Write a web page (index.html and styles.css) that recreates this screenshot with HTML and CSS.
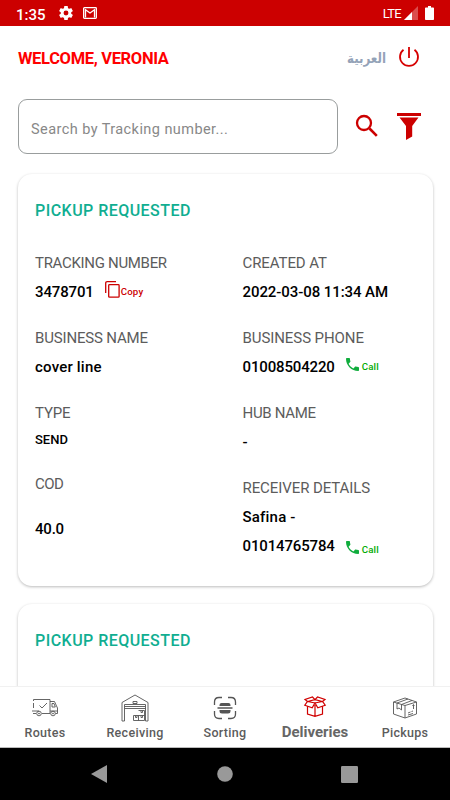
FILE: index.html
```html
<!DOCTYPE html>
<html lang="en">
<head>
<meta charset="utf-8">
<title>Deliveries</title>
<link rel="stylesheet" href="styles.css">
</head>
<body>
<svg class="defs" width="0" height="0">
  <symbol id="phone" viewBox="3 3 18 18"><path d="M6.62 10.79c1.44 2.83 3.76 5.14 6.59 6.59l2.2-2.2c.27-.27.67-.36 1.02-.24 1.12.37 2.33.57 3.57.57.55 0 1 .45 1 1V20c0 .55-.45 1-1 1C10.610 21 3 13.390 3 4c0-.55.45-1 1-1h3.500c.55 0 1 .45 1 1 0 1.250.2 2.450.57 3.570.11.35.03.74-.25 1.020z"/></symbol>
</svg>
<div class="screen">
  <div class="status">
    <span class="clock">1:35</span>
    <svg class="gear" width="14" height="14" viewBox="2 2 20 20"><path fill="#fff" d="M19.430 12.980c.04-.32.07-.64.07-.98s-.03-.66-.07-.98l2.110-1.650c.19-.15.24-.42.12-.64l-2-3.460c-.12-.22-.39-.3-.61-.22l-2.490 1c-.52-.4-1.080-.73-1.690-.98l-.38-2.650C14.460 2.180 14.250 2 14 2h-4c-.25 0-.46.18-.49.42l-.38 2.650c-.61.25-1.170.59-1.690.98l-2.490-1c-.23-.09-.49 0-.61.22l-2 3.460c-.13.22-.07.49.12.64l2.110 1.650c-.04.32-.07.65-.07.98s.03.66.07.98l-2.110 1.650c-.19.15-.24.42-.12.64l2 3.460c.12.22.39.3.61.22l2.490-1c.52.4 1.080.73 1.690.98l.38 2.650c.03.24.24.42.49.42h4c.25 0 .46-.18.49-.42l.38-2.650c.61-.25 1.170-.59 1.690-.98l2.490 1c.23.09.49 0 .61-.22l2-3.460c.12-.22.07-.49-.12-.64zM12 15.500a3.500 3.500 0 1 1 0-7 3.500 3.500 0 0 1 0 7z"/></svg>
    <svg class="mail" width="14" height="12" viewBox="0 0 14 12"><rect x=".65" y=".65" width="12.700" height="10.700" rx=".8" fill="none" stroke="#fff" stroke-width="1.300"/><path d="M2.500 10.500V2.800L7 6l4.500-3.200v7.700" fill="none" stroke="#fff" stroke-width="1.300"/></svg>
    <span class="lte">LTE</span>
    <svg class="signal" width="14" height="14" viewBox="0 0 14 14"><path d="M14 0v14H0z" fill="#fff" opacity=".3"/><path d="M8 6v8H0z" fill="#fff"/></svg>
    <svg class="battery" width="9" height="14" viewBox="0 0 9 14"><path d="M3 0h3v1.500h2.200q.8 0 .8.800v11q0 .7-.8.700H.8q-.8 0-.8-.7v-11q0-.8.800-.8H3z" fill="#fff"/></svg>
  </div>
  <header class="header">
    <h1 class="welcome">WELCOME, VERONIA</h1>
    <span class="lang" lang="ar" dir="rtl">العربية</span>
    <svg class="power" width="22" height="22" viewBox="0 0 22 22" fill="none" stroke="#d60000" stroke-width="1.800"><path d="M11 1v11M5.500 3.800a9 9 0 1 0 11 0"/></svg>
  </header>
  <div class="search">
    <div class="input">Search by Tracking number...</div>
    <svg class="lens" width="24" height="24" viewBox="0 0 24 24" fill="none" stroke="#c00"><circle cx="9" cy="9" r="7" stroke-width="2.300"/><path d="M14.500 14.500l7.300 7.300" stroke-width="2.600"/></svg>
    <svg class="funnel" width="24" height="27" viewBox="0 0 24 27" fill="#c00"><path d="M0 0h24v3H0zM2.500 4.500h19L15.200 13v10.500L9 27V13z"/></svg>
  </div>
  <main class="list">
    <section class="card">
      <h2 class="state">PICKUP REQUESTED</h2>
      <div class="fields">
        <div class="column">
          <div class="field"><div class="label tight">TRACKING NUMBER</div><div class="value"><span class="num">3478701</span>
            <span class="action copy"><svg width="15" height="17" viewBox="0 0 15 17" fill="none" stroke="#c00" stroke-width="1.300"><path d="M.7 12V2.200Q.7.700 2.200.700H11"/><rect x="3.700" y="3.700" width="10.400" height="12.500" rx=".8"/></svg>Copy</span></div></div>
          <div class="field"><div class="label">BUSINESS NAME</div><div class="value words">cover line</div></div>
          <div class="field type"><div class="label">TYPE</div><div class="value small">SEND</div></div>
          <div class="field cod"><div class="label tight cod-label">COD</div><div class="value amount">40.0</div></div>
        </div>
        <div class="column">
          <div class="field"><div class="label loose">CREATED AT</div><div class="value date">2022-03-08 11:34 AM</div></div>
          <div class="field"><div class="label loose">BUSINESS PHONE</div><div class="value"><span class="num">01008504220</span>
            <span class="action call"><svg width="13" height="13"><use href="#phone"/></svg>Call</span></div></div>
          <div class="field"><div class="label tight">HUB NAME</div><div class="value">-</div></div>
          <div class="field"><div class="label loose">RECEIVER DETAILS</div><div class="value words">Safina -</div>
            <div class="value"><span class="num">01014765784</span><span class="action call low"><svg width="13" height="13"><use href="#phone"/></svg>Call</span></div></div>
        </div>
      </div>
    </section>
    <section class="card next"><h2 class="state">PICKUP REQUESTED</h2></section>
  </main>
  <nav class="tabs">
    <div class="tab"><svg width="28" height="28" viewBox="0 0 28 28" fill="none" stroke="#555" stroke-width=".9"><path d="M2.500 7V5.500h16.500v14H11M2.500 9v5M19 7.500h4.500l2 4.500 1 2v5.500h-2M21 9.500h2l1.300 3.500H21zM1 17h7M2 19.500h3M19 17h7.500M8.500 11.500l2.500 2.500 5-5"/><circle cx="8" cy="19.500" r="2.300"/><circle cx="22" cy="19.500" r="2.300"/><circle cx="8" cy="19.500" r=".5"/><circle cx="22" cy="19.500" r=".5"/></svg><span>Routes</span></div>
    <div class="tab"><svg width="28" height="28" viewBox="0 0 28 28" fill="none" stroke="#555" stroke-width=".9"><path d="M1 27V8.500L14 1l13 7.500V27h-2.500V10.500h-21V27zM3.500 12.500h21M3.500 14.500h21M12 7.500h4v2h-4zM17.500 16.500h6v10h-11v-5h11M17.500 21.500v5M20 16.500v2h1.500v-2M14.500 21.500v2H16v-2M20 21.500v2h1.500v-2"/></svg><span>Receiving</span></div>
    <div class="tab"><svg width="28" height="28" viewBox="0 0 28 28" fill="none" stroke="#555" stroke-width="1.300"><path d="M3.500 11V8q0-4.500 4.500-4.500h3M17 3.500h3q4.500 0 4.500 4.500v3M24.500 17v3q0 4.500-4.500 4.500h-3M11 24.500H8q-4.500 0-4.500-4.500v-3M6.500 14h15"/><path d="M8.500 12V11q0-2 2-2h7q2 0 2 2v1zM8.500 16v1q0 2.500 2.500 2.500h6q2.500 0 2.500-2.500v-1z" fill="#555" stroke="none"/></svg><span>Sorting</span></div>
    <div class="tab active"><svg width="28" height="28" viewBox="0 0 28 28" fill="none" stroke="#d00000" stroke-width="1.200"><path d="M14 9L6.500 7.500 3.800 11.200l7.400 2.500L14 9l2.800 4.700 7.400-2.500-2.700-3.700zM6.500 7.500L4 5.500 11.500 3 14 5.700 16.500 3 24 5.500l-2.500 2M14 5.700l-7.500 1.800M14 5.700l7.500 1.800M6.500 12.500v7.500l7.500 2.300 7.500-2.300v-7.500M14 11v11"/></svg><span>Deliveries</span></div>
    <div class="tab"><svg width="28" height="28" viewBox="0 0 28 28" fill="none" stroke="#555" stroke-width=".9"><path d="M2.500 8L14 4l11.500 4v12L14 24 2.500 20zM2.500 8L14 11.500 25.500 8M14 11.500V24M6 9v6l2-1 2.500 2v-5.500L21 6.500M6 9l11-4M22.500 15v-4M21.500 12l1-1.500 1 1M17 19l2.500-1M17 21l5-1.500M20.500 17.500l1.500-.5"/></svg><span>Pickups</span></div>
  </nav>
  <div class="system">
    <svg width="16" height="18" viewBox="0 0 16 18"><path d="M0 9L16 0v18z" fill="#999"/></svg>
    <svg width="16" height="16" viewBox="0 0 16 16"><circle cx="8" cy="8" r="7.800" fill="#999"/></svg>
    <svg width="17" height="17" viewBox="0 0 17 17"><rect width="17" height="17" rx="1.200" fill="#999"/></svg>
  </div>
</div>
</body>
</html>
```
FILE: styles.css
```css
* { box-sizing: border-box; }
body { margin: 0; font-family: Roboto, "Liberation Sans", sans-serif; background: #fff; }
.defs { position: absolute; }
.screen { width: 450px; height: 800px; display: flex; flex-direction: column; overflow: hidden; }
.status { height: 26px; flex: none; background: #c00; color: #fff; display: flex; align-items: center; padding: 0 16px; }
.clock { font-size: 15px; font-weight: 500; width: 43px; padding-top: 3px; }
.mail { margin-left: 10px; }
.lte { margin-left: auto; font-size: 13px; letter-spacing: -.7px; padding-top: 1px; }
.signal { margin-left: 3px; }
.battery { margin-left: 7px; }
.header { height: 73px; flex: none; display: flex; padding: 20px 30px 0 18px; }
.welcome { margin: 1px 0 0; font-size: 16.5px; font-weight: 700; color: #f00; line-height: 24px; letter-spacing: -.33px; }
.lang { margin-left: auto; color: #94a3b8; font: 700 14px/25px "DejaVu Sans", sans-serif; transform: scaleX(.85); transform-origin: right; }
.power { margin: 0 0 0 12px; }
.search { height: 55px; flex: none; display: flex; padding-left: 18px; }
.input { width: 320px; height: 55px; border: 1px solid #999d9d; border-radius: 9px; padding-left: 12px; font-size: 14.5px; line-height: 59px; color: #888; letter-spacing: .43px; }
.lens { margin: 15px 0 0 17px; }
.funnel { margin: 14px 0 0 18px; }
.list { flex: 1; min-height: 0; overflow: hidden; padding: 20px 17px 0 18px; }
.card { height: 412px; border-radius: 14px; padding: 26px 18px 0 17px; box-shadow: 0 1px 3px rgba(0,0,0,.27); }
.card.next { margin-top: 18px; }
.state { margin: 0; font-size: 16px; line-height: 21px; font-weight: 500; color: #10ae91; letter-spacing: .46px; }
.fields { display: grid; grid-template-columns: 207.5px 1fr; padding-top: 32px; }
.field { margin-bottom: 26px; }
.label { height: 20px; line-height: 21px; font-size: 15px; color: #5c5c5c; letter-spacing: -.17px; white-space: nowrap; }
.label.tight { letter-spacing: -.31px; }
.label.loose { letter-spacing: -.08px; }
.label.cod-label { letter-spacing: -.5px; }
.value { height: 20px; margin-top: 9px; line-height: 20px; font-size: 15px; font-weight: 500; color: #000; display: flex; letter-spacing: .4px; white-space: nowrap; }
.num { letter-spacing: -.15px; }
.date { letter-spacing: -.08px; }
.words { letter-spacing: .2px; }
.amount { letter-spacing: -.2px; }
.type .value { margin-top: 6px; line-height: 21px; letter-spacing: 0; }
.type { margin-bottom: 25px; }
.cod .value { margin-top: 25px; }
.value.small { font-size: 13px; }
.action { display: flex; align-items: center; font-size: 9.7px; font-weight: 500; letter-spacing: .2px; margin-left: 11px; }
.copy { color: #c00; margin-top: -1px; }
.copy svg { margin: -4px 1px 0 0; }
.call { color: #0a0; height: 19px; }
.call svg { fill: #10ad3d; margin: -5px 3px 0 0; }
.call.low { margin-top: 4px; }
.tabs { height: 62px; flex: none; display: grid; grid-template-columns: repeat(5, 90px); background: #fff; border-top: 1px solid #f1f1f1; border-bottom: 1px solid #bbb; padding-top: 8px; }
.tab { display: flex; flex-direction: column; align-items: center; font-size: 12.5px; line-height: 20px; color: #5c5c5c; font-weight: 500; letter-spacing: .3px; }
.tab svg { margin-top: -1px; margin-bottom: 1px; }
.active { font-size: 15px; font-weight: 700; color: #666; letter-spacing: 0; }
.active svg { margin-top: -1px; margin-bottom: 0; }
.system { height: 52px; flex: none; background: #000; display: grid; grid-template-columns: 90px 90px 90px 79px 1fr; align-items: center; }
.system svg { justify-self: center; }
.system svg:nth-child(1) { grid-column: 1 / 3; margin-left: 18px; }
.system svg:nth-child(2) { grid-column: 3; }
.system svg:nth-child(3) { grid-column: 4; margin-left: 79px; }
```
